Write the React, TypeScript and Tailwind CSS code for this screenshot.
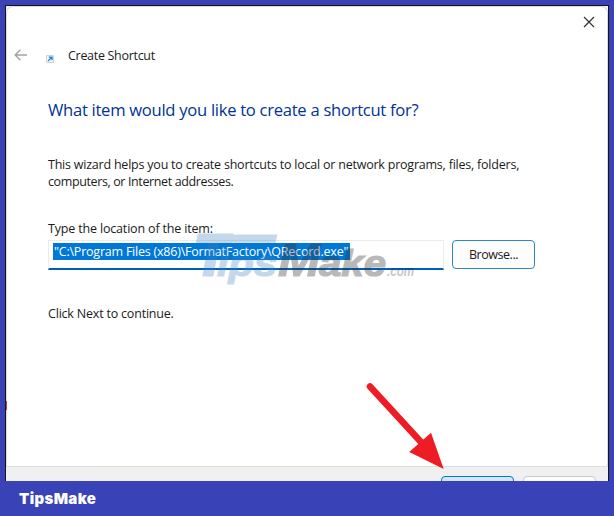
import { useState } from "react";

const BackArrow = () => (
    <svg width="14" height="12" viewBox="0 0 14 12" fill="none" stroke="#a2a2a2" strokeWidth="1.4">
        <path d="M13 6H1.3M6.4 .8 1.2 6l5.2 5.2" />
    </svg>
);

const ShortcutIcon = () => (
    <svg width="8" height="8" viewBox="0 0 8 8" fill="none">
        <path d="M.5.5h7v7h-7z" fill="#f3f8fc" stroke="#cfd3d7" />
        <path d="M2 6l3.4-3.4M2.8 2.1H6v3.2" stroke="#1686d9" strokeWidth="1.3" />
    </svg>
);

const CloseIcon = () => (
    <svg width="12" height="12" viewBox="0 0 12 12" stroke="#303030" strokeWidth="1.15">
        <path d="M1 1l10 10M11 1 1 11" />
    </svg>
);

// Site mark laid over the location field
const Watermark = () => (
    <svg
        className="pointer-events-none absolute left-[190px] top-[225px] font-['Liberation_Sans',sans-serif] font-bold italic"
        width="230"
        height="65"
        viewBox="190 225 230 65"
    >
        <g fill="#3f82c0" stroke="#3f82c0" opacity="0.3">
            <text x="194" y="275" fontSize="57" textLength="34" lengthAdjust="spacingAndGlyphs" strokeWidth="3">T</text>
            <path d="M198 234.4h79.5l-2 8.4h-79.5z" stroke="none" />
            <text x="217" y="275.5" fontSize="37" textLength="60" lengthAdjust="spacingAndGlyphs" strokeWidth="1.2">ips</text>
        </g>
        <g fill="#333333" stroke="#333333" opacity="0.34">
            <text x="278" y="275.5" fontSize="47" textLength="42" lengthAdjust="spacingAndGlyphs" strokeWidth="1.2">M</text>
            <text x="319" y="275.5" fontSize="37" textLength="67" lengthAdjust="spacingAndGlyphs" strokeWidth="1.2">ake</text>
        </g>
        <text x="387" y="275.5" fontSize="14" textLength="27" lengthAdjust="spacingAndGlyphs" fill="#222222" opacity="0.26">.com</text>
    </svg>
);

const RedArrow = () => (
    <svg className="pointer-events-none absolute left-[360px] top-[378px]" width="90" height="96" viewBox="360 378 90 96">
        <path d="M370 386.5 421 442" stroke="#ee1c24" strokeWidth="6.6" strokeLinecap="round" />
        <path d="M443.7 469 409.2 452 431 432.7z" fill="#ee1c24" />
    </svg>
);

const App = () => {
    const [location] = useState('"C:\\Program Files (x86)\\FormatFactory\\QRecord.exe"');

    return (
        <div className="relative flex h-[516px] w-[614px] flex-col overflow-hidden bg-[#3943b7] pt-[5px] font-['Open_Sans',sans-serif] text-[12.5px] text-[#1b1b1b]">
            {/* Wizard window */}
            <div className="ml-[5px] flex h-[476px] w-[604px] flex-col overflow-hidden border-x border-t border-[#151515] bg-[#f2f2f2]">
                <div className="relative flex flex-1 flex-col rounded-t-[7px] border-x border-t border-[#dadada] bg-white">
                    <span className="absolute left-[-1px] top-[394px] h-[9px] w-px bg-[#c9404a]" />
                    <header className="flex h-[30px] items-center justify-end pr-[12px]">
                        <button><CloseIcon /></button>
                    </header>

                    <div className="flex h-[36px] items-center pl-[7px]">
                        <button className="mb-px"><BackArrow /></button>
                        <span className="ml-[18px] mt-[8px]"><ShortcutIcon /></span>
                        <span className="ml-[14px] mt-[2px] whitespace-nowrap tracking-[-0.3px]">Create Shortcut</span>
                    </div>

                    <div className="flex flex-col items-start pl-[41px]">
                        <h1 className="mt-[25px] whitespace-nowrap text-[16.6px] leading-[24px] tracking-[-0.28px] text-[#003399]">
                            What item would you like to create a shortcut for?
                        </h1>
                        <p className="mt-[34px] whitespace-nowrap leading-[17px] tracking-[-0.22px]">
                            This wizard helps you to create shortcuts to local or network programs, files, folders,
                            <br />
                            <span className="tracking-[-0.38px]">computers, or Internet addresses.</span>
                        </p>
                        <label className="mt-[30px] whitespace-nowrap leading-[17px] tracking-[-0.17px]">Type the location of the item:</label>
                        <div className="mt-[3px] flex gap-[8px]">
                            <div className="flex h-[30px] w-[396px] items-start border border-b-2 border-[#ececec] border-b-[#005fb8] pl-[4px] pt-[2px]">
                                <span className="h-[17px] w-[297px] whitespace-nowrap bg-[#0078d7] pl-px leading-[18px] tracking-[-0.22px] text-white">{location}</span>
                            </div>
                            <button className="h-[29px] w-[83px] rounded-[4px] border border-[#2a86cf] bg-[#fdfdfd] pt-px tracking-[-0.45px]">Browse...</button>
                        </div>
                        <p className="mt-[35px] whitespace-nowrap leading-[17px] tracking-[-0.2px]">Click Next to continue.</p>
                    </div>
                </div>

                {/* Action row, cut off by the banner below */}
                <footer className="flex h-[15px] shrink-0 items-start justify-end gap-[9px] overflow-hidden border-t border-[#dcdcdc] bg-[#f0f0f0] pr-[12px] pt-[9px]">
                    <button className="h-[28px] w-[73px] shrink-0 rounded-[4px] border border-[#0078d4] bg-[#d5e6f3]" />
                    <button className="h-[28px] w-[73px] shrink-0 rounded-[4px] border border-[#cacaca] bg-[#fcfcfc]" />
                </footer>
            </div>

            <div className="flex flex-1 items-center pl-[19px] pt-px">
                <span className="font-['Inter',sans-serif] text-[15px] font-black tracking-[0.35px] text-white">TipsMake</span>
            </div>

            <Watermark />
            <RedArrow />
        </div>
    );
};

export default App;
